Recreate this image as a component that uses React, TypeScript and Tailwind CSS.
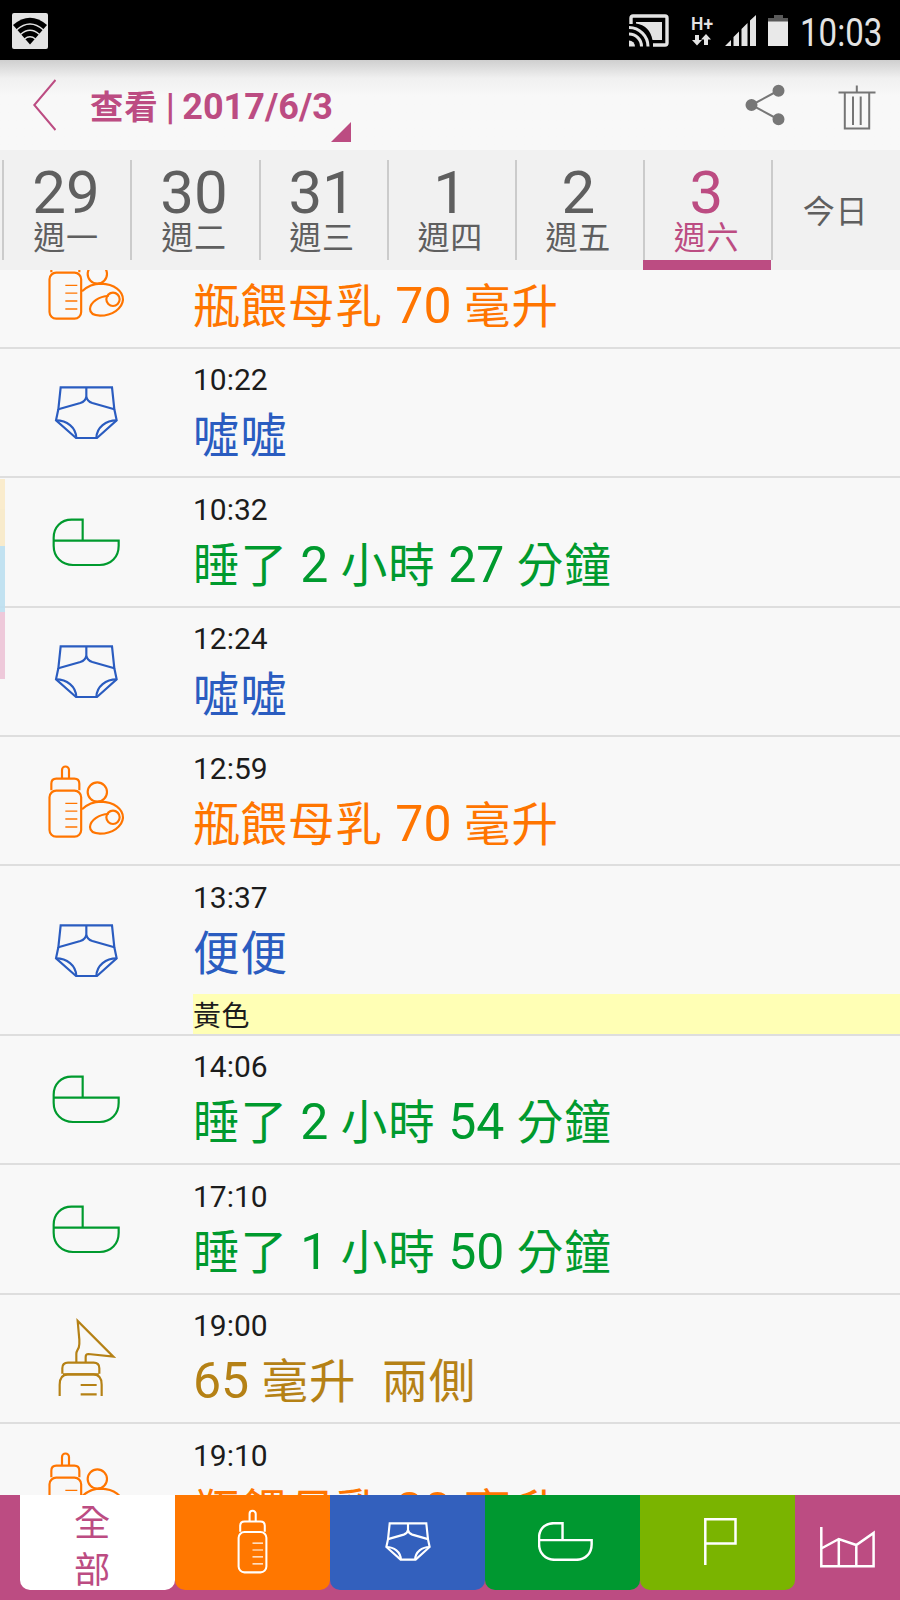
import type { ReactNode } from "react";
import clsx from "clsx";

type IconName = "bottleBaby" | "diaper" | "cradle" | "pump";

type Entry = {
  time: string;
  text: string;
  icon: IconName;
  color: string;
  note?: string;
};

const ORANGE = "text-[#ff7500]";
const BLUE = "text-[#2a5cc0]";
const GREEN = "text-[#009a2e]";
const BROWN = "text-[#b58115]";

const DAYS = [
  { day: "29", label: "週一" },
  { day: "30", label: "週二" },
  { day: "31", label: "週三" },
  { day: "1", label: "週四" },
  { day: "2", label: "週五" },
  { day: "3", label: "週六", active: true },
];

const ENTRIES: Entry[] = [
  { time: "09:55", text: "瓶餵母乳 70 毫升", icon: "bottleBaby", color: ORANGE },
  { time: "10:22", text: "噓噓", icon: "diaper", color: BLUE },
  { time: "10:32", text: "睡了 2 小時 27 分鐘", icon: "cradle", color: GREEN },
  { time: "12:24", text: "噓噓", icon: "diaper", color: BLUE },
  { time: "12:59", text: "瓶餵母乳 70 毫升", icon: "bottleBaby", color: ORANGE },
  { time: "13:37", text: "便便", icon: "diaper", color: BLUE, note: "黃色" },
  { time: "14:06", text: "睡了 2 小時 54 分鐘", icon: "cradle", color: GREEN },
  { time: "17:10", text: "睡了 1 小時 50 分鐘", icon: "cradle", color: GREEN },
  { time: "19:00", text: "65 毫升  兩側", icon: "pump", color: BROWN },
  { time: "19:10", text: "瓶餵母乳 80 毫升", icon: "bottleBaby", color: ORANGE },
];

/** Han glyphs run slightly smaller than the Latin digits beside them. */
function Mixed({ children }: { children: string }) {
  return (
    <>
      {children.split(/([\u4e00-\u9fff]+)/).map((part, i) =>
        i % 2 ? (
          <span key={i} className="text-[0.93em] leading-[0] tracking-[0.021em]">
            {part}
          </span>
        ) : (
          part
        ),
      )}
    </>
  );
}

function BottlePaths() {
  return (
    <>
      <path d="M186 171V147a10.5 10.5 0 0 1 21 0v24" />
      <path d="M154 208v-20q0-15 15-15h54q15 0 15 15v20" />
      <rect x="148.500" y="209" width="95" height="138" rx="20" />
      <path d="M196 247h36M196 270.500h36M196 294h36M196 318h36" strokeWidth="4" />
    </>
  );
}

function DiaperPaths() {
  return (
    <>
      <path d="M182 381h154l7 66 7 33-59 53h-63l-60-53 7-33z" />
      <path d="M259 381v27q-2 15-18 20l-66 19M259 408q2 15 18 20l66 19" />
      <path d="M168 480c32 0 60 20 61 53M350 480c-32 0-60 20-61 53" />
    </>
  );
}

function CradlePaths() {
  return (
    <path d="M248 180v-63h-33c-32 0-54 22-54 54v24c0 34 24 58 58 58h80c34 0 57-24 57-58v-15H161" />
  );
}

const ICONS: Record<IconName, { box: string; body: ReactNode }> = {
  bottleBaby: {
    box: "123 108 270 270",
    body: (
      <>
        <BottlePaths />
        <circle cx="292" cy="213" r="29" />
        <path d="M246 265c17-16 37-23 57-23 40 1 66 22 66 48-2 27-33 48-69 48-20-1-30-8-30-20 1-20 26-38 56-39" />
        <circle cx="339" cy="289" r="20" />
      </>
    ),
  },
  diaper: { box: "123 323 270 270", body: <DiaperPaths /> },
  cradle: { box: "123 52 270 270", body: <CradlePaths /> },
  pump: {
    box: "123 72 270 270",
    body: (
      <>
        <path d="M229 216v-24q0-6 3-11 6-9 6-19v-13l-5-56 107 107-75-8q-8 0-8 9v15" />
        <path d="M187 251v-16q0-17 17-17h77q17 0 17 17v16M189 253h107" />
        <path d="M179 318v-34q0-30 24-31h78q24 1 24 31v34M242 285h48M242 313h48" />
      </>
    ),
  },
};

function EntryIcon({ name }: { name: IconName }) {
  const icon = ICONS[name];
  return (
    <svg viewBox={icon.box} className="mt-0.5 size-[90px]" fill="none" stroke="currentColor" strokeWidth="6.500">
      {icon.body}
    </svg>
  );
}

function StatusBar() {
  return (
    <div className="flex h-[60px] shrink-0 items-start bg-black pl-3 text-[#e3e3e3]">
      <svg viewBox="0 0 36 36" className="mt-[13px] size-9">
        <rect width="36" height="36" rx="2" fill="#e3e3e3" />
        <path d="M1 12Q18 -2.500 35 12L18 31.500z" fill="#000" />
        <g fill="none" stroke="#e3e3e3" strokeWidth="1.300">
          <path d="M4.500 17Q18 5 31.500 17M8.500 21.500Q18 13 27.500 21.500M12.500 26Q18 21.500 23.500 26" />
        </g>
      </svg>
      <svg viewBox="0 0 40 33" className="ml-auto mt-[14px] h-[33px] w-10" fill="none" stroke="currentColor">
        <path d="M2 10V4q0-2 2-2h32q2 0 2 2v25q0 2-2 2H24" strokeWidth="3.400" />
        <path d="M7 8h26v18H23.500C22 17 16 10.500 7 9.500z" fill="currentColor" stroke="none" />
        <path d="M0 13.500a19 19 0 0 1 19 19M0 20a12.500 12.500 0 0 1 12.500 12.500" strokeWidth="3" />
        <path d="M0 26.500a6 6 0 0 1 6 6H0z" fill="currentColor" stroke="none" />
      </svg>
      <div className="ml-[22px] mt-[15px] w-[24px]">
        <p className="origin-left scale-x-[0.92] text-[19px]/[18px] font-semibold">H+</p>
        <svg viewBox="0 0 20 12" className="mt-[1px] h-3 w-5" fill="currentColor">
          <path d="M4 1h4v5h3l-5 5.500L1 6h3zM13 11h4V5.500h3L15 0l-5 5.500h3z" />
        </svg>
      </div>
      <svg viewBox="0 0 32 31" className="ml-2.5 mt-[15px] h-[31px] w-8" fill="currentColor">
        <path d="M0 31l6-6v6zM8.500 31V22l5.500-5.500V31zM16.500 31V14l6-6v23zM25 31V5.500L31 0v31z" />
      </svg>
      <svg viewBox="0 0 20 31" className="ml-[11px] mt-[15px] h-[31px] w-5">
        <path d="M6 0h9v3h5v4H0V3h6z" fill="#595959" />
        <path d="M0 6.500h20V31H0z" fill="#e9e9e9" />
      </svg>
      <p className="mr-[30px] mt-[10.6px] w-[82px] text-[38px]/[45px]">
        <span className="ml-[11.500px] inline-block origin-left scale-x-[0.87]">10:03</span>
      </p>
    </div>
  );
}

function Header() {
  return (
    <header className="flex h-[90px] shrink-0 items-start bg-linear-to-b from-[#cfcfcf] via-[#f0f0f0] via-20% to-[#f8f8f8] to-40%">
      <svg viewBox="0 0 24 52" className="ml-8 mt-[19px] h-[52px] w-6" fill="none" stroke="#bc4c82" strokeWidth="2">
        <path d="M23.500 1L2.300 26l21.200 25" />
      </svg>
      <h1 className="ml-[34px] mt-[25px] text-[36px]/[44px] font-bold text-[#bc4c82] [word-spacing:-1.500px]">
        <Mixed>查看 | 2017/6/3</Mixed>
      </h1>
      <svg viewBox="0 0 20 20" className="-ml-0.5 mt-[62px] size-5" fill="#bc4c82">
        <path d="M20 0v20H0z" />
      </svg>
      <svg viewBox="0 0 40 42" className="ml-auto mt-6 h-[42px] w-10" fill="#777" stroke="#777" strokeWidth="2">
        <path d="M33.500 6.500L6.500 21l27 14.500" fill="none" />
        <circle cx="33.500" cy="6.700" r="5" />
        <circle cx="6.500" cy="21" r="5" />
        <circle cx="33.500" cy="35.300" r="5" />
      </svg>
      <svg viewBox="0 0 38 46" className="ml-[53px] mr-6 mt-6 h-[46px] w-[38px]" fill="none" stroke="#757575" strokeWidth="2">
        <path d="M0.500 8.500h37M18.800 1.500v7M6.800 8.500v36h24.400v-36M15 12.500V41M22.700 12.500V41" />
      </svg>
    </header>
  );
}

function DayStrip() {
  return (
    <nav className="flex h-[120px] shrink-0 bg-[#f1f1f1] pl-[2.4px] pt-2.5 text-[#5f5f5f]">
      {DAYS.map((d) => (
        <div
          key={d.day}
          className={clsx("flex w-[128.1px] flex-col", d.active && "text-[#bc4c82]")}
        >
          <div className="h-[100px] border-l-2 border-[#cbcbcb] pr-[3px] pt-[5px] text-center">
            <p className="text-[60px]/[56px]">{d.day}</p>
            <p className="-mt-0.5 text-[34.500px]/[36px]">
              <Mixed>{d.label}</Mixed>
            </p>
          </div>
          {d.active && <div className="h-2.5 bg-[#bc4c82]" />}
        </div>
      ))}
      <div className="flex h-[100px] flex-1 items-center justify-center border-l-2 border-[#cbcbcb] pr-0.5 pt-0.5 text-[34.500px]/[36px]">
        <p>
          <Mixed>今日</Mixed>
        </p>
      </div>
    </nav>
  );
}

function EntryRow({ entry }: { entry: Entry }) {
  return (
    <li className="flex items-center border-b-2 border-[#dedede]">
      <div className={clsx("flex w-[193px] pl-[41px]", entry.color)}>
        <EntryIcon name={entry.icon} />
      </div>
      <div className="flex-1">
        <div className="h-[127.4px] pt-[13.6px]">
          <p className="text-[30px]/[36px] text-[#1c1c1c]">{entry.time}</p>
          <p className={clsx("mt-[7px] whitespace-pre text-[50px]/[60px]", entry.color)}>
            <Mixed>{entry.text}</Mixed>
          </p>
        </div>
        {entry.note && (
          <p className="h-10 bg-[#ffffb5] text-[30px]/[43px] text-[#1c1c1c]">
            <Mixed>{entry.note}</Mixed>
          </p>
        )}
      </div>
    </li>
  );
}

function Tab({ className, children }: { className: string; children: ReactNode }) {
  return (
    <div className={clsx("flex h-[95px] w-[155px] justify-center rounded-b-[10px]", className)}>
      {children}
    </div>
  );
}

function TabBar() {
  return (
    <nav className="flex h-[105px] shrink-0 bg-[#bc4c82] pl-5 text-white">
      <Tab className="bg-white text-[#bc4c82]">
        <p className="mr-2.5 mt-[5px] w-10 text-center text-[39px]/[47px]">
          <Mixed>全</Mixed>
          <br />
          <Mixed>部</Mixed>
        </p>
      </Tab>
      <Tab className="items-center bg-[#ff7700]">
        <svg viewBox="143 131 106 221" className="mb-0.5 h-[65px] w-[31px]" fill="none" stroke="currentColor" strokeWidth="7">
          <BottlePaths />
        </svg>
      </Tab>
      <Tab className="items-center bg-[#3360bd]">
        <svg viewBox="163 375 192 164" className="mb-[3px] h-[39px] w-[46px]" fill="none" stroke="currentColor" strokeWidth="9">
          <DiaperPaths />
        </svg>
      </Tab>
      <Tab className="items-center bg-[#009830]">
        <svg viewBox="157 113 204 144" className="mb-[3px] ml-1.5 h-[39px] w-[55px]" fill="none" stroke="currentColor" strokeWidth="9">
          <CradlePaths />
        </svg>
      </Tab>
      <Tab className="items-center bg-[#7ab400]">
        <svg viewBox="0 0 33 47" className="mb-0.5 ml-[5px] h-[47px] w-[33px]" fill="none" stroke="currentColor" strokeWidth="2.500">
          <path d="M1.300 47V1.300h30.200v24.200H1.300" />
        </svg>
      </Tab>
      <svg viewBox="0 0 55 41" className="ml-[25px] mt-8 h-[41px] w-[55px]" fill="none" stroke="currentColor" strokeWidth="2.500">
        <path d="M1.300 0v39.300h52.300V6L36.300 18 18.800 12 1.300 21.500M18.800 12v27M36.300 18v21" />
      </svg>
    </nav>
  );
}

export default function App() {
  return (
    <div className="flex h-[1600px] w-[900px] flex-col overflow-hidden bg-[#f8f8f8] font-['Roboto','Noto_Sans_CJK_TC',sans-serif]">
      <StatusBar />
      <Header />
      <DayStrip />
      <main className="relative min-h-0 flex-1 overflow-hidden">
        <ul className="-mt-[50.6px]">
          {ENTRIES.map((entry) => (
            <EntryRow key={entry.time} entry={entry} />
          ))}
        </ul>
        {/* scroll hint on the left edge */}
        <div className="absolute left-0 top-[209px] flex w-[5px] flex-col opacity-90">
          <div className="h-[66.500px] bg-[#f9eac8]" />
          <div className="h-[66.500px] bg-[#bde0f1]" />
          <div className="h-[67px] bg-[#edc5d7]" />
        </div>
      </main>
      <TabBar />
    </div>
  );
}
